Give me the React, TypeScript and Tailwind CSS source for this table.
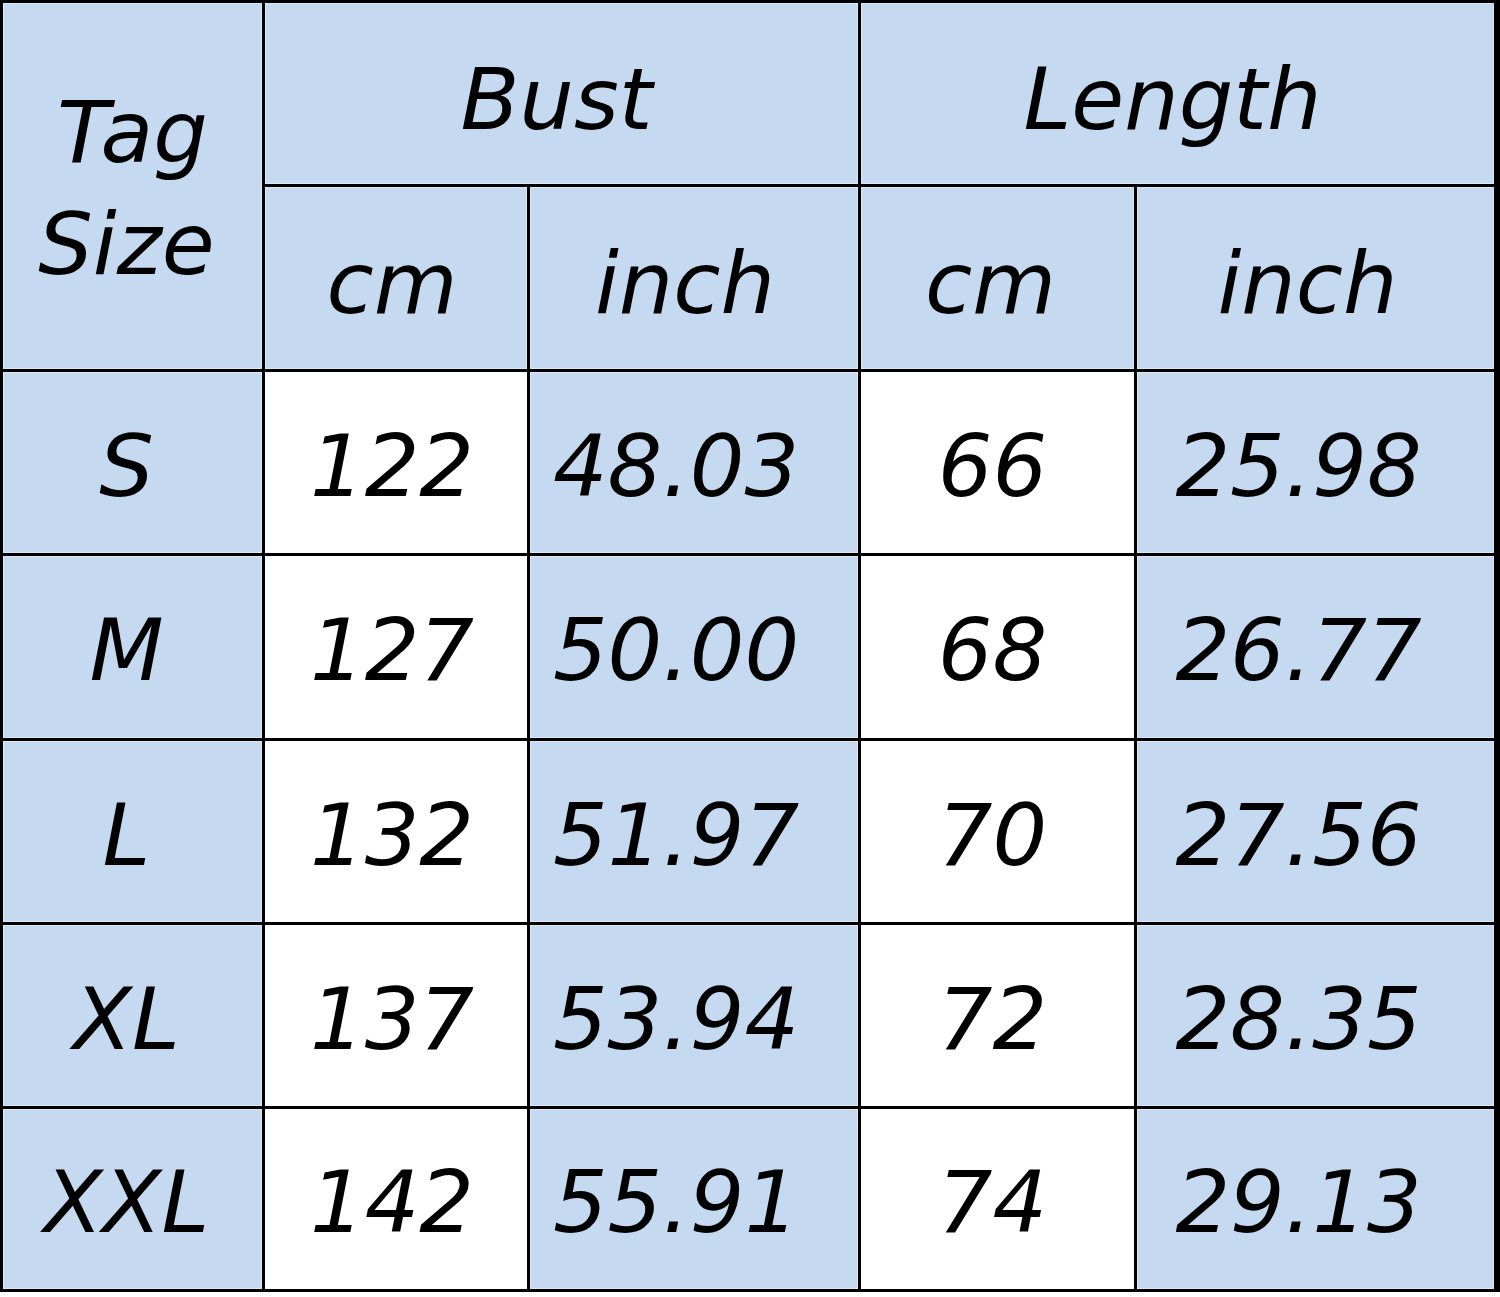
import React from "react";

const rows = [
  ["S", "122", "48.03", "66", "25.98"],
  ["M", "127", "50.00", "68", "26.77"],
  ["L", "132", "51.97", "70", "27.56"],
  ["XL", "137", "53.94", "72", "28.35"],
  ["XXL", "142", "55.91", "74", "29.13"],
];

const font = "font-['DejaVu_Sans',Verdana,sans-serif] italic text-[86px] leading-none text-black";
const blue = "bg-[#c5d9f1] shadow-[inset_0_0_0_1px_#dde8f6]";

export default function App() {
  return (
    <div className="w-[1500px] h-[1297px] bg-white">
      <div
        className={`grid grid-cols-[259px_262px_328px_273px_357px] grid-rows-[181px_182px_181px_182px_181px_181px_180px] gap-[3px] bg-black pt-[3px] pl-[3px] pr-[6px] pb-[3px] w-[1500px] ${font}`}
      >
        <div className={`${blue} row-span-2 flex flex-col items-center justify-center leading-[112px] pt-[4px]`}>
          <span>Tag</span>
          <span className="pr-[12px]">Size</span>
        </div>
        <div className={`${blue} col-span-2 flex items-center justify-center pr-[10px] pt-[10px]`}>Bust</div>
        <div className={`${blue} col-span-2 flex items-center justify-center pr-[10px] pt-[10px]`}>Length</div>
        <div className={`${blue} flex items-center justify-center pr-[8px] pt-[10px]`}>cm</div>
        <div className={`${blue} flex items-center justify-center pr-[18px] pt-[10px]`}>inch</div>
        <div className={`${blue} flex items-center justify-center pr-[14px] pt-[10px]`}>cm</div>
        <div className={`${blue} flex items-center justify-center pr-[16px] pt-[10px]`}>inch</div>
        {rows.map((r) => (
          <React.Fragment key={r[0]}>
            <div className={`${blue} flex items-center justify-center pr-[12px] pt-[6px]`}>{r[0]}</div>
            <div className="bg-white flex items-center justify-center pr-[8px] pt-[6px]">{r[1]}</div>
            <div className={`${blue} flex items-center justify-center pr-[36px] pt-[6px]`}>{r[2]}</div>
            <div className="bg-white flex items-center justify-center pr-[10px] pt-[6px]">{r[3]}</div>
            <div className={`${blue} flex items-center justify-center pr-[34px] pt-[6px]`}>{r[4]}</div>
          </React.Fragment>
        ))}
      </div>
    </div>
  );
}
